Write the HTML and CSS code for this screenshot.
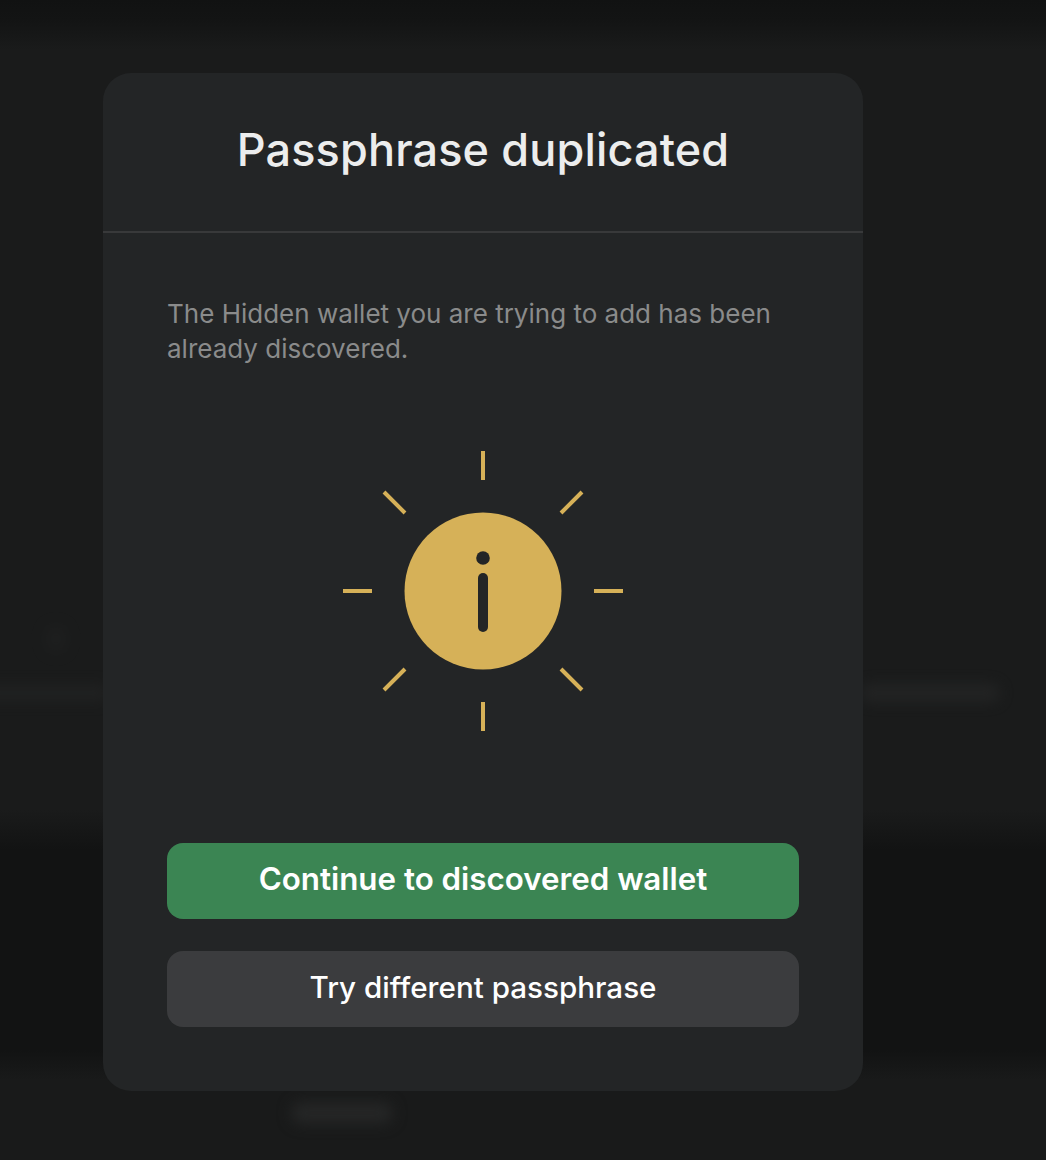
FILE: index.html
```html
<!DOCTYPE html>
<html lang="en">
<head>
<meta charset="utf-8">
<title>Passphrase duplicated</title>
<link rel="stylesheet" href="styles.css">
</head>
<body>
<div class="backdrop" aria-hidden="true">
  <span class="blob blob-left"></span>
  <span class="blob blob-right"></span>
  <span class="blob blob-bottom"></span>
  <span class="blob blob-spot"></span>
</div>
<main class="modal">
  <header class="modal-header"><h1 class="modal-title">Passphrase duplicated</h1></header>
  <section class="modal-body">
    <p class="modal-text">The Hidden wallet you are trying to add has been already discovered.</p>
    <div class="modal-icon">
      <svg class="sun" width="280" height="280" viewBox="0 0 280 280" fill="none">
        <g stroke="#d6b158" stroke-width="4">
          <path d="M140 0V29M140 251V280M0 140H29M251 140H280M41 41L62 62M239 41L218 62M41 239L62 218M239 239L218 218"/>
        </g>
        <circle cx="140" cy="140" r="78.5" fill="#d6b158"/>
        <circle cx="140" cy="107" r="6.8" fill="#232526"/>
        <rect x="135" y="122" width="10" height="59" rx="5" fill="#232526"/>
      </svg>
    </div>
    <div class="modal-actions">
      <button class="btn btn-primary" type="button">Continue to discovered wallet</button>
      <button class="btn btn-secondary" type="button">Try different passphrase</button>
    </div>
  </section>
</main>
</body>
</html>
```
FILE: styles.css
```css
* { box-sizing: border-box; }
html, body { margin: 0; height: 100%; }
body {
  width: 1046px;
  height: 1160px;
  overflow: hidden;
  position: relative;
  padding: 73px 0 0 103px;
  font-family: Inter, "Liberation Sans", sans-serif;
  background: linear-gradient(180deg, #111212 0, #131414 20px, #1a1b1b 50px, #1a1b1b 810px, #121313 850px, #121313 1050px, #191a1a 1080px, #191a1a 100%);
}
.backdrop { position: absolute; inset: 0; overflow: hidden; }
.blob { position: absolute; background: #252626; filter: blur(7px); border-radius: 12px; }
.blob-left { left: -20px; top: 685px; width: 130px; height: 16px; opacity: .6; }
.blob-right { left: 860px; top: 684px; width: 140px; height: 18px; opacity: .8; }
.blob-bottom { left: 291px; top: 1102px; width: 102px; height: 22px; }
.blob-spot { left: 45px; top: 625px; width: 22px; height: 28px; opacity: .35; }
.modal {
  position: relative;
  width: 760px;
  height: 1018px;
  border-radius: 28px;
  background: #232526;
  display: flex;
  flex-direction: column;
}
.modal-header {
  height: 160px;
  display: flex;
  align-items: center;
  justify-content: center;
  padding-bottom: 5px;
  border-bottom: 2px solid #38393a;
}
.modal-title {
  margin: 0;
  font-size: 45px;
  line-height: 56px;
  font-weight: 500;
  letter-spacing: .15px;
  color: #eceded;
}
.modal-body { flex: 1; display: flex; flex-direction: column; padding: 63px 64px 64px; }
.modal-text { margin: 0; width: 620px; font-size: 26px; line-height: 35px; color: #8a8b8b; }
.modal-icon { display: flex; justify-content: center; padding-top: 85px; }
.sun { display: block; }
.modal-actions { display: flex; flex-direction: column; gap: 32px; margin-top: auto; }
.btn {
  height: 76px;
  border: 0;
  border-radius: 16px;
  font-family: inherit;
  color: #fff;
  padding: 0 0 4px;
}
.btn-primary { background: #3b8553; font-weight: 600; font-size: 31.3px; }
.btn-secondary { background: #3b3c3e; font-weight: 500; font-size: 29.6px; }
```
